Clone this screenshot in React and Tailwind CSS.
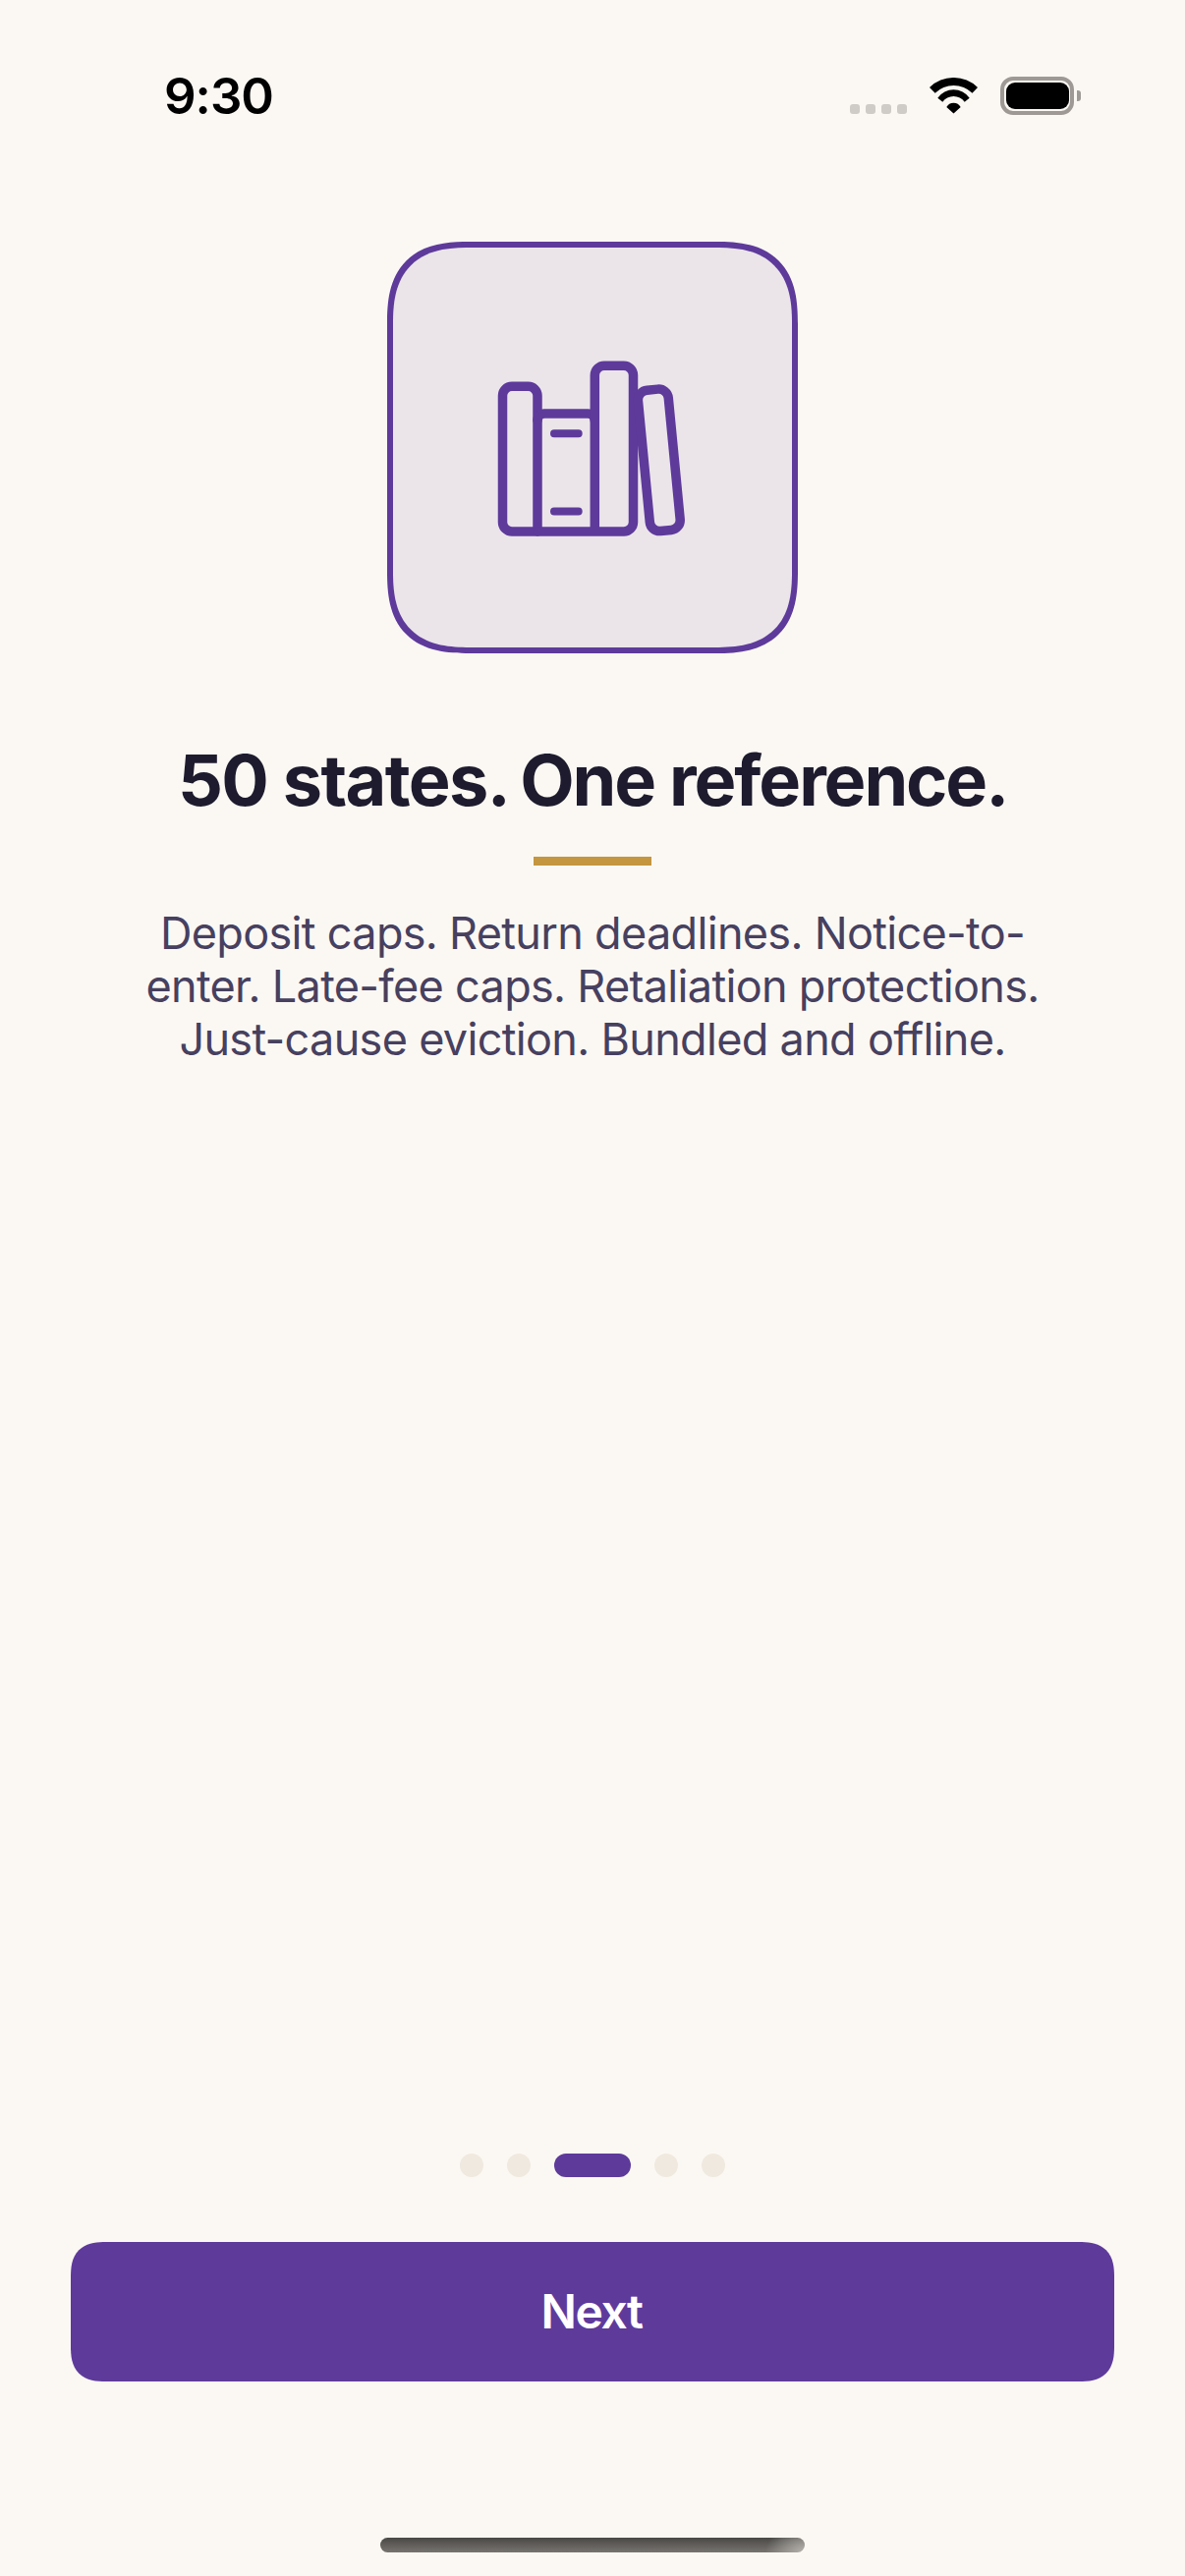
const font = { fontFamily: "Inter, 'Noto Sans', sans-serif" };

function BooksIcon() {
  return (
    <svg viewBox="0 0 240 180" className="h-[180px] w-[240px]" fill="none" stroke="#5e3a9b" strokeWidth="9.5" strokeLinejoin="round" strokeLinecap="round">
      <path d="M64 175H38a9.5 9.5 0 0 1-9.5-9.5V36.8a9.5 9.5 0 0 1 9.5-9.5h16.5a9.5 9.5 0 0 1 9.5 9.5V175" />
      <path d="M64 62a7 7 0 0 1 7-7h44.300a7 7 0 0 1 7 7" />
      <path d="M122.300 175V16a9.700 9.700 0 0 1 9.700-9.700h19.800a9.700 9.700 0 0 1 9.700 9.700V165.500a9.500 9.500 0 0 1-9.500 9.500H64" />
      <rect x="172.300" y="30.300" width="31" height="144" rx="10" transform="rotate(-5.500 187.800 102.300)" />
      <path d="M81 75.200h24.700M81 154.500h24.700" strokeWidth="8" />
    </svg>
  );
}

function StatusBar() {
  return (
    <div className="flex h-[246px] items-start">
      <span className="ml-[167px] mt-[67px] text-[51px] leading-[62px] font-semibold tracking-[-1px] text-black">9:30</span>
      <div className="ml-auto mr-[106px] mt-[78px] flex items-start">
        <div className="mt-[28px] flex gap-[6px]">
          {[0, 1, 2, 3].map((i) => (
            <span key={i} className="h-[10px] w-[10px] rounded-[3px] bg-[#cfcbc6]" />
          ))}
        </div>
        <svg viewBox="0 0 49 37" className="ml-[23px] mt-[1px] h-[37px] w-[49px]" fill="#000">
          <path d="M0 10A35 35 0 0 1 49 10L43.5 15.7A27 27 0 0 0 5.7 15.7Z" />
          <path d="M8.3 20.7A19.8 19.8 0 0 1 40.7 20.7L35.7 24.7A13.8 13.8 0 0 0 13.3 24.7Z" />
          <path d="M17.3 30A8.2 8.2 0 0 1 31.7 30L24.5 36.5Z" />
        </svg>
        <div className="ml-[23px] flex h-[39px] w-[75px] items-center justify-center rounded-[13px] border-[4px] border-[#9e9994]">
          <span className="h-[27px] w-[64px] rounded-[9px] bg-black" />
        </div>
        <span className="ml-[3px] mt-[14px] h-[11px] w-[4px] rounded-r-[3px] bg-[#9e9994]" />
      </div>
    </div>
  );
}

export default function App() {
  return (
    <div className="flex h-[2622px] w-[1206px] flex-col items-stretch bg-[#fbf8f3]" style={font}>
      <StatusBar />
      <main className="flex flex-1 flex-col items-center">
        <div className="flex h-[419px] w-[418px] items-center justify-center rounded-[84px] border-[6px] border-[#5e3a9b] bg-[#ebe5ea] [corner-shape:superellipse(1.4)]">
          <BooksIcon />
        </div>
        <h1 className="mt-[86px] text-[72px] leading-[86px] font-bold tracking-[-2.1px] text-[#1e1b2e]">
          <span className="tracking-[-1.6px]">50 states.</span> <span className="ml-[-4px]">One reference.</span>
        </h1>
        <div className="mt-[35px] h-[9px] w-[120px] bg-[#c4963f]" />
        <p className="mt-[42px] w-[930px] text-center text-[45px] leading-[54px] tracking-[-0.68px] text-[#47405f]">
          Deposit caps. Return deadlines. Notice-to-enter. Late-fee caps. Retaliation protections. Just-cause eviction. Bundled and offline.
        </p>
        <div className="mt-auto flex items-center gap-[24px]">
          <span className="h-[24px] w-[24px] rounded-full bg-[#f0e9df]" />
          <span className="h-[24px] w-[24px] rounded-full bg-[#f0e9df]" />
          <span className="h-[24px] w-[78px] rounded-full bg-[#5e3a9b]" />
          <span className="h-[24px] w-[24px] rounded-full bg-[#f0e9df]" />
          <span className="h-[24px] w-[24px] rounded-full bg-[#f0e9df]" />
        </div>
        <button className="mt-[66px] h-[142px] w-[1062px] rounded-[36px] bg-[#5e3a9b] pr-[2px] text-[48px] font-semibold tracking-[-1.5px] text-white [corner-shape:superellipse(1.4)]">Next</button>
        <div className="mb-[24px] mt-[159px] h-[15px] w-[432px] rounded-full bg-[radial-gradient(ellipse_40px_30px_at_100%_100%,#b5b2ad,transparent),linear-gradient(180deg,#4a4845,#777470)]" />
      </main>
    </div>
  );
}
